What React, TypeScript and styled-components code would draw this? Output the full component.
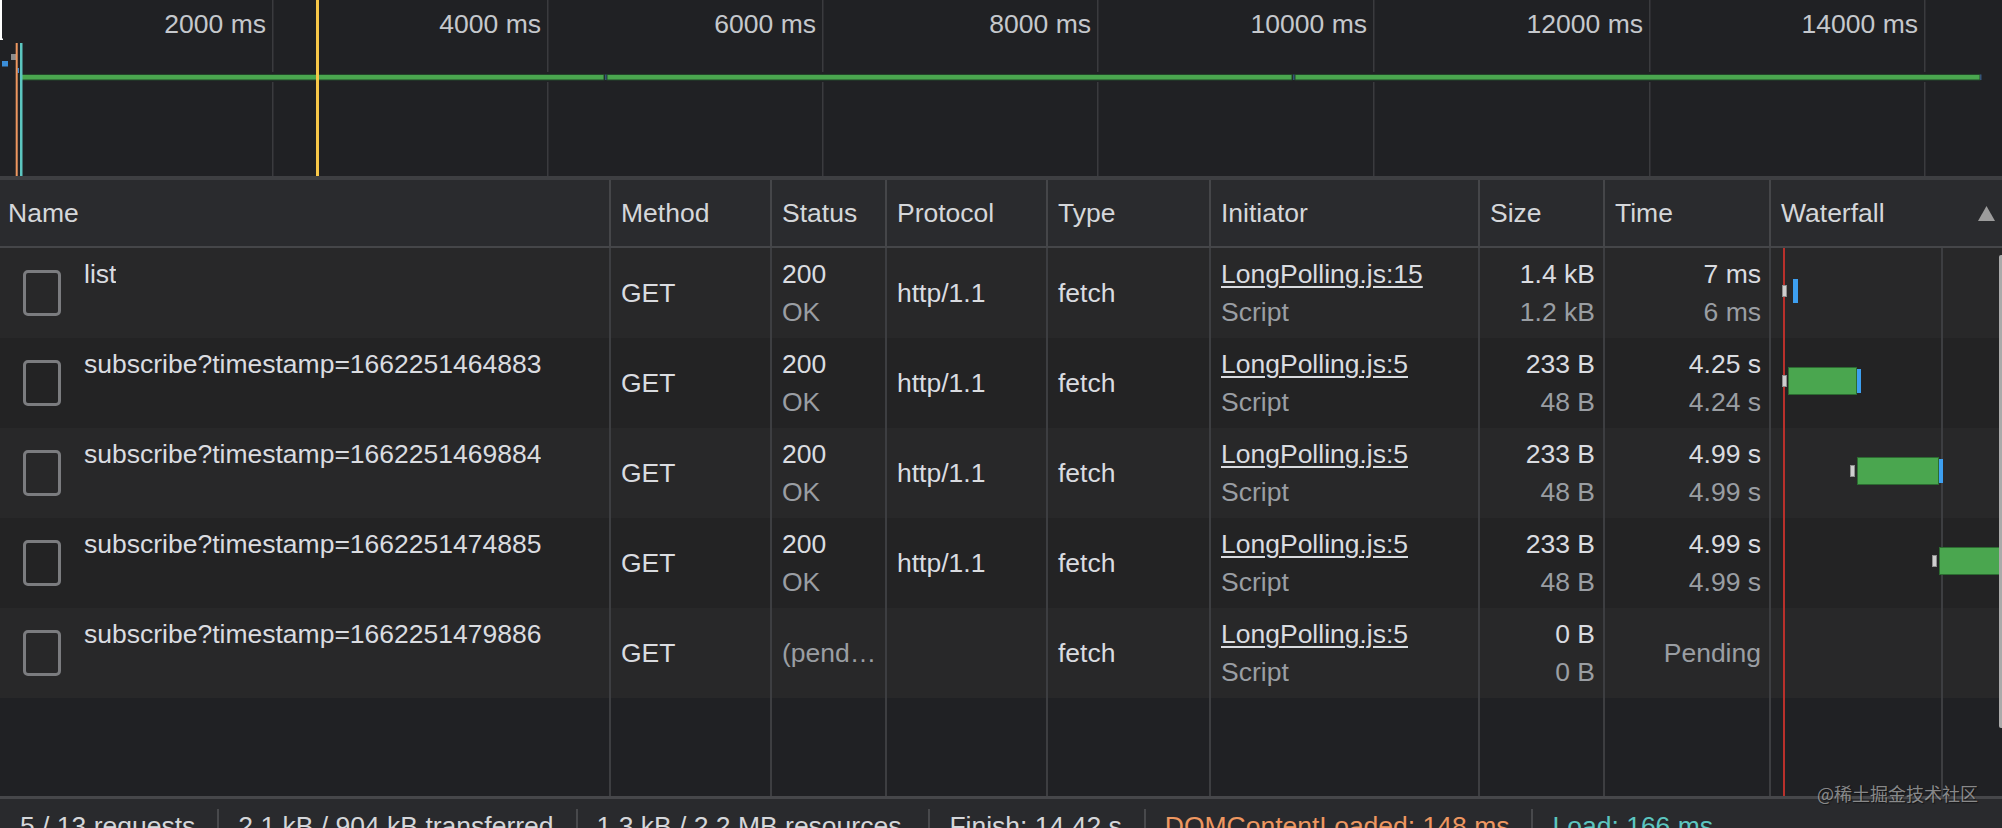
import styled, { createGlobalStyle } from 'styled-components';

const COLS = '609px 161px 115px 161px 163px 269px 125px 166px 233px';

const GlobalStyle = createGlobalStyle`
  html, body {
    margin: 0;
    padding: 0;
    background: #202124;
    overflow: hidden;
  }
  body {
    font-family: 'Liberation Sans', Arial, sans-serif;
  }
`;

const Panel = styled.div`
  position: relative;
  width: 2002px;
  height: 828px;
  display: flex;
  flex-direction: column;
  background: #202124;
  color: #dadce0;
  font-size: 26.5px;
  overflow: hidden;
`;

const Overview = styled.div`
  flex: none;
  height: 176px;
  border-bottom: 4px solid #3e3f42;

  svg {
    display: block;
  }
`;

const HeaderRow = styled.div`
  flex: none;
  display: grid;
  grid-template-columns: ${COLS};
  height: 66px;
  background: #2a2b2e;
  border-bottom: 2px solid #454649;
`;

const HeadCell = styled.div<{ $first?: boolean }>`
  display: flex;
  align-items: center;
  justify-content: space-between;
  padding: ${(p) => (p.$first ? '0 10px 0 8px' : '0 7px 0 10px')};
  border-left: ${(p) => (p.$first ? 'none' : '2px solid #454649')};
  color: #d5d7da;
  white-space: nowrap;
`;

const Row = styled.div<{ $alt?: boolean }>`
  flex: none;
  display: grid;
  grid-template-columns: ${COLS};
  height: 90px;
  background: ${(p) => (p.$alt ? '#232324' : '#282829')};
`;

const Filler = styled(Row)`
  flex: 1;
  height: auto;
  background: #202124;
`;

const Cell = styled.div<{ $right?: boolean; $tight?: boolean }>`
  display: flex;
  align-items: center;
  justify-content: ${(p) => (p.$right ? 'flex-end' : 'flex-start')};
  padding: ${(p) => (p.$right ? '0 8px 0 10px' : p.$tight ? '0 3px 0 10px' : '0 9px 0 10px')};
  border-left: 2px solid #3d3e41;
  min-width: 0;
  overflow: hidden;
  white-space: nowrap;
`;

const NameCell = styled.div`
  display: flex;
  align-items: center;
  gap: 23px;
  padding-left: 23px;
  min-width: 0;
  overflow: hidden;
  white-space: nowrap;
`;

const FileIcon = styled.span`
  flex: none;
  width: 38px;
  height: 46px;
  box-sizing: border-box;
  border: 3px solid #7b7c7f;
  border-radius: 5px;
`;

const Lines = styled.div<{ $right?: boolean }>`
  display: flex;
  flex-direction: column;
  align-items: ${(p) => (p.$right ? 'flex-end' : 'flex-start')};
  min-width: 0;
`;

const Line = styled.span<{ $dim?: boolean }>`
  height: 38px;
  line-height: 38px;
  max-width: 100%;
  color: ${(p) => (p.$dim ? '#9a9ea3' : '#dadce0')};
  overflow: hidden;
  text-overflow: ellipsis;
  white-space: nowrap;
`;

const Link = styled(Line)`
  text-decoration: underline;
  text-underline-offset: 3px;
  text-decoration-thickness: 2px;
`;

const WaterfallCell = styled.div`
  position: relative;
  border-left: 2px solid #3d3e41;
  overflow: hidden;
  background-image: linear-gradient(
    to right,
    transparent 12px,
    #b8302b 12px,
    #b8302b 14px,
    transparent 14px,
    transparent 170px,
    #3d3e41 170px,
    #3d3e41 172px,
    transparent 172px
  );
`;

type BarKind = 'queue' | 'wait' | 'download';

const Bar = styled.span<{ $kind: BarKind }>`
  position: absolute;
  box-sizing: border-box;
  top: ${(p) => (p.$kind === 'queue' ? 37 : p.$kind === 'wait' ? 29 : 31)}px;
  height: ${(p) => (p.$kind === 'queue' ? 12 : p.$kind === 'wait' ? 28 : 24)}px;
  background: ${(p) => (p.$kind === 'queue' ? '#cfcfcf' : p.$kind === 'wait' ? '#4aa64f' : '#3d9ff0')};
  border: ${(p) =>
    p.$kind === 'queue' ? '1px solid #8e8e8e' : p.$kind === 'wait' ? '1px solid #2c6b31' : 'none'};
`;

const SortArrow = styled.svg`
  flex: none;
  width: 17px;
  height: 15px;
  fill: #9c9c9c;
`;

const Footer = styled.div`
  flex: none;
  height: 32px;
  box-sizing: border-box;
  display: flex;
  align-items: flex-start;
  padding-top: 10px;
  border-top: 3px solid #46474a;
  background: #292a2d;
`;

const FooterItem = styled.div<{ $tone?: 'dcl' | 'load'; $first?: boolean; $wide?: boolean }>`
  flex: none;
  height: 40px;
  padding-top: 2px;
  padding-left: ${(p) => (p.$first ? 20 : 19)}px;
  padding-right: ${(p) => (p.$wide ? 27 : 22)}px;
  border-left: ${(p) => (p.$first ? 'none' : '2px solid #48494c')};
  line-height: 30px;
  white-space: nowrap;
  color: ${(p) => (p.$tone === 'dcl' ? '#ee9760' : p.$tone === 'load' ? '#5cc6c0' : '#d5d7da')};
`;

const Watermark = styled.div`
  position: absolute;
  left: 1817px;
  top: 783px;
  font-family: 'Noto Sans CJK SC', sans-serif;
  font-size: 18px;
  line-height: 20px;
  color: rgba(185, 185, 185, 0.7);
  text-shadow: 1px 1px 1px rgba(0, 0, 0, 0.5);
  white-space: nowrap;
`;

const ScrollThumb = styled.div`
  position: absolute;
  right: 0;
  top: 255px;
  width: 3px;
  height: 473px;
  border-radius: 2px 0 0 2px;
  background: #aaaaaa;
`;

const ticks = [272, 547, 822, 1097, 1373, 1649, 1924];
const greenSegments: [number, number][] = [
  [20, 604],
  [607, 1292],
  [1295, 1980],
];

const OverviewChart = () => (
  <svg width={2002} height={176} viewBox="0 0 2002 176">
    {ticks.map((x) => (
      <g key={x} fill="#3a3b3e">
        <rect x={x} y={0} width={1.5} height={72} />
        <rect x={x} y={82} width={1.5} height={94} />
      </g>
    ))}
    {ticks.map((x, i) => (
      <text
        key={`l${x}`}
        x={x - 6}
        y={33}
        textAnchor="end"
        fontFamily="'Liberation Sans', Arial, sans-serif"
        fontSize={26.5}
        fill="#c5c8cc"
      >
        {(i + 1) * 2000} ms
      </text>
    ))}
    <rect x={0} y={0} width={2} height={40} fill="#ffffff" />
    <rect x={0} y={38.5} width={3} height={1.5} fill="#ffffff" />
    <rect x={11} y={54} width={5} height={6} fill="#8d8d8d" />
    <rect x={2} y={61} width={6} height={5.5} fill="#3b8ed8" />
    <rect x={17.5} y={68} width={1.5} height={5} fill="#3b8ed8" />
    {greenSegments.map(([a, b]) => (
      <rect key={a} x={a} y={74.5} width={b - a} height={5.5} fill="#4aa64f" stroke="#23462a" strokeWidth={1} />
    ))}
    <rect x={605} y={74.5} width={1.5} height={5.5} fill="#34557a" />
    <rect x={1293} y={74.5} width={1.5} height={5.5} fill="#34557a" />
    <rect x={1980} y={74.5} width={1.5} height={5.5} fill="#34557a" />
    <rect x={15.7} y={43} width={2} height={133} fill="#ee9760" />
    <rect x={20} y={43} width={2.5} height={133} fill="#5cc6c0" />
    <rect x={316} y={0} width={3} height={176} fill="#f7c748" />
  </svg>
);

type Seg = { kind: BarKind; x: number; w: number };

type Req = {
  name: string;
  status: string;
  statusText?: string;
  protocol: string;
  initiator: string;
  size: string;
  resource: string;
  time: string;
  latency?: string;
  bars: Seg[];
};

const requests: Req[] = [
  {
    name: 'list',
    status: '200',
    statusText: 'OK',
    protocol: 'http/1.1',
    initiator: 'LongPolling.js:15',
    size: '1.4 kB',
    resource: '1.2 kB',
    time: '7 ms',
    latency: '6 ms',
    bars: [
      { kind: 'queue', x: 11, w: 5 },
      { kind: 'download', x: 22, w: 5 },
    ],
  },
  {
    name: 'subscribe?timestamp=1662251464883',
    status: '200',
    statusText: 'OK',
    protocol: 'http/1.1',
    initiator: 'LongPolling.js:5',
    size: '233 B',
    resource: '48 B',
    time: '4.25 s',
    latency: '4.24 s',
    bars: [
      { kind: 'queue', x: 11, w: 5 },
      { kind: 'wait', x: 17, w: 69 },
      { kind: 'download', x: 86, w: 4 },
    ],
  },
  {
    name: 'subscribe?timestamp=1662251469884',
    status: '200',
    statusText: 'OK',
    protocol: 'http/1.1',
    initiator: 'LongPolling.js:5',
    size: '233 B',
    resource: '48 B',
    time: '4.99 s',
    latency: '4.99 s',
    bars: [
      { kind: 'queue', x: 79, w: 5 },
      { kind: 'wait', x: 86, w: 82 },
      { kind: 'download', x: 168, w: 4 },
    ],
  },
  {
    name: 'subscribe?timestamp=1662251474885',
    status: '200',
    statusText: 'OK',
    protocol: 'http/1.1',
    initiator: 'LongPolling.js:5',
    size: '233 B',
    resource: '48 B',
    time: '4.99 s',
    latency: '4.99 s',
    bars: [
      { kind: 'queue', x: 161, w: 5 },
      { kind: 'wait', x: 168, w: 80 },
    ],
  },
  {
    name: 'subscribe?timestamp=1662251479886',
    status: '(pending)',
    protocol: '',
    initiator: 'LongPolling.js:5',
    size: '0 B',
    resource: '0 B',
    time: 'Pending',
    bars: [],
  },
];

const headers = ['Method', 'Status', 'Protocol', 'Type', 'Initiator', 'Size', 'Time'];

const RequestRow = ({ req, alt }: { req: Req; alt: boolean }) => (
  <Row $alt={alt}>
    <NameCell>
      <FileIcon />
      <Lines>
        <Line>{req.name}</Line>
        <Line>&nbsp;</Line>
      </Lines>
    </NameCell>
    <Cell>GET</Cell>
    <Cell $tight>
      {req.statusText ? (
        <Lines>
          <Line>{req.status}</Line>
          <Line $dim>{req.statusText}</Line>
        </Lines>
      ) : (
        <Line $dim>{req.status}</Line>
      )}
    </Cell>
    <Cell>{req.protocol}</Cell>
    <Cell>fetch</Cell>
    <Cell>
      <Lines>
        <Link>{req.initiator}</Link>
        <Line $dim>Script</Line>
      </Lines>
    </Cell>
    <Cell $right>
      <Lines $right>
        <Line>{req.size}</Line>
        <Line $dim>{req.resource}</Line>
      </Lines>
    </Cell>
    <Cell $right>
      {req.latency ? (
        <Lines $right>
          <Line>{req.time}</Line>
          <Line $dim>{req.latency}</Line>
        </Lines>
      ) : (
        <Line $dim>{req.time}</Line>
      )}
    </Cell>
    <WaterfallCell>
      {req.bars.map((b, i) => (
        <Bar key={i} $kind={b.kind} style={{ left: b.x, width: b.w }} />
      ))}
    </WaterfallCell>
  </Row>
);

const App = () => (
  <Panel>
    <GlobalStyle />
    <Overview>
      <OverviewChart />
    </Overview>
    <HeaderRow>
      <HeadCell $first>Name</HeadCell>
      {headers.map((h) => (
        <HeadCell key={h}>{h}</HeadCell>
      ))}
      <HeadCell>
        Waterfall
        <SortArrow viewBox="0 0 17 15">
          <polygon points="8.5,0 17,15 0,15" />
        </SortArrow>
      </HeadCell>
    </HeaderRow>
    {requests.map((r, i) => (
      <RequestRow key={r.name} req={r} alt={i % 2 === 1} />
    ))}
    <Filler>
      <NameCell />
      <Cell />
      <Cell />
      <Cell />
      <Cell />
      <Cell />
      <Cell />
      <Cell />
      <WaterfallCell />
    </Filler>
    <Footer>
      <FooterItem $first>5 / 13 requests</FooterItem>
      <FooterItem>2.1 kB / 904 kB transferred</FooterItem>
      <FooterItem $wide>1.3 kB / 2.2 MB resources</FooterItem>
      <FooterItem>Finish: 14.42 s</FooterItem>
      <FooterItem $tone="dcl">DOMContentLoaded: 148 ms</FooterItem>
      <FooterItem $tone="load">Load: 166 ms</FooterItem>
    </Footer>
    <ScrollThumb />
    <Watermark>@稀土掘金技术社区</Watermark>
  </Panel>
);

export default App;
